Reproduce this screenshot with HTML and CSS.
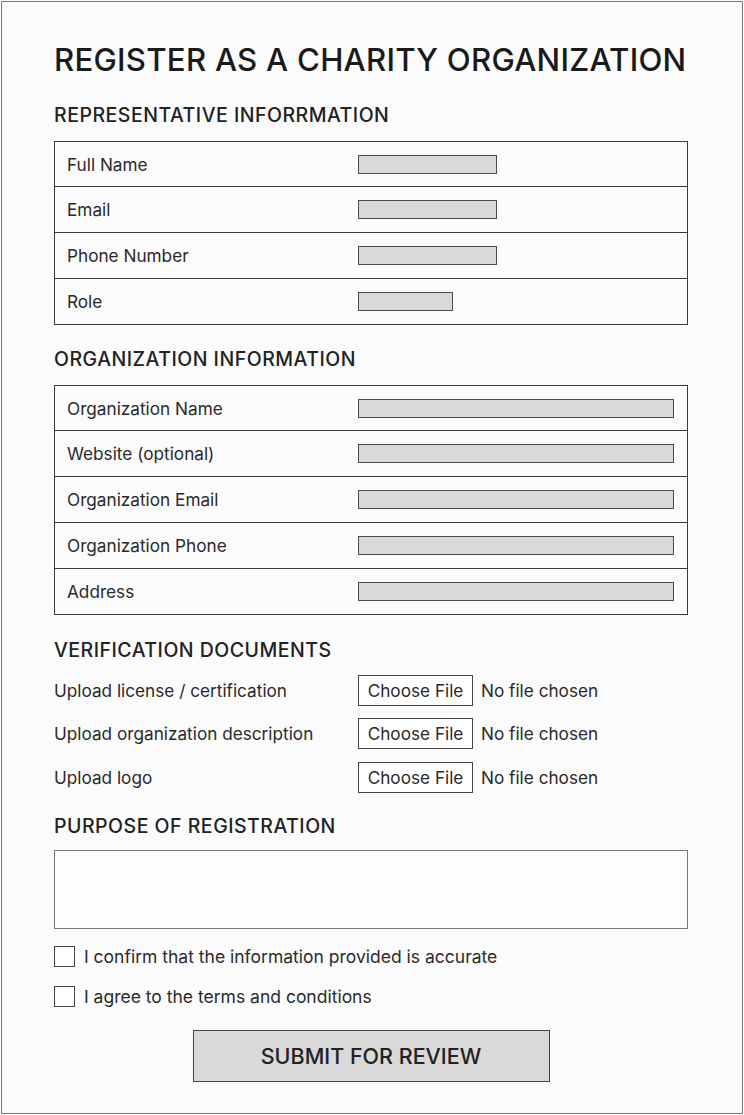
FILE: index.html
```html
<!DOCTYPE html>
<html>
<head>
<meta charset="utf-8">
<link rel="stylesheet" href="styles.css">
</head>
<body>
<div class="page">
  <h1 class="title">REGISTER AS A CHARITY ORGANIZATION</h1>

  <h2 class="section s1">REPRESENTATIVE INFORRMATION</h2>
  <div class="table">
    <div class="row"><span class="label">Full Name</span><span class="field short"></span></div>
    <div class="row"><span class="label">Email</span><span class="field short"></span></div>
    <div class="row"><span class="label">Phone Number</span><span class="field short"></span></div>
    <div class="row"><span class="label">Role</span><span class="field tiny"></span></div>
  </div>

  <h2 class="section s2">ORGANIZATION INFORMATION</h2>
  <div class="table">
    <div class="row"><span class="label">Organization Name</span><span class="field long"></span></div>
    <div class="row"><span class="label">Website (optional)</span><span class="field long"></span></div>
    <div class="row"><span class="label">Organization Email</span><span class="field long"></span></div>
    <div class="row"><span class="label">Organization Phone</span><span class="field long"></span></div>
    <div class="row"><span class="label">Address</span><span class="field long"></span></div>
  </div>

  <h2 class="section s3">VERIFICATION DOCUMENTS</h2>
  <div class="uploads">
    <div class="upload"><span class="ulabel">Upload license / certification</span><span class="file"><span class="choose">Choose File</span><span class="none">No file chosen</span></span></div>
    <div class="upload"><span class="ulabel">Upload organization description</span><span class="file"><span class="choose">Choose File</span><span class="none">No file chosen</span></span></div>
    <div class="upload"><span class="ulabel">Upload logo</span><span class="file"><span class="choose">Choose File</span><span class="none">No file chosen</span></span></div>
  </div>

  <h2 class="section s4">PURPOSE OF REGISTRATION</h2>
  <div class="textarea"></div>

  <div class="checks">
    <label class="check"><span class="box"></span><span>I confirm that the information provided is accurate</span></label>
    <label class="check"><span class="box"></span><span>I agree to the terms and conditions</span></label>
  </div>

  <div class="actions"><button class="submit">SUBMIT FOR REVIEW</button></div>
</div>
</body>
</html>
```
FILE: styles.css
```css
* { box-sizing: border-box; }
html, body { margin: 0; padding: 0; background: #ffffff; }
body { font-family: Inter, "Liberation Sans", sans-serif; color: #1e1e1e; }

.page {
  margin: 1px;
  height: 1113px;
  border: 1px solid #7a7a7a;
  background: #fbfbfb;
  padding: 38px 54px 0 52px;
  display: flex;
  flex-direction: column;
}

.title {
  margin: 0;
  font-size: 31.2px;
  font-weight: 500;
  line-height: 40px;
  letter-spacing: 0.25px;
  color: #1a1a1a;
}

.section {
  margin: 22px 0 14px;
  font-size: 19.5px;
  font-weight: 500;
  line-height: 24px;
  letter-spacing: 0.5px;
  color: #222;
}
.s1 { margin-top: 23px; }
.s2 { margin-top: 22px; }
.s3 { margin-top: 23px; }
.s4 { margin-top: 21px; margin-bottom: 12px; }

.table {
  border: 1px solid #3a3a3a;
  display: flex;
  flex-direction: column;
}
.row {
  height: 46px;
  display: flex;
  align-items: center;
  padding-left: 12px;
  border-top: 1px solid #3a3a3a;
}
.row:first-child { border-top: none; height: 44px; }
.label {
  width: 291px;
  font-size: 17.2px;
  color: #2a2a2a;
}
.field {
  height: 19px;
  background: #d9d9d9;
  border: 1.5px solid #4a4a4a;
  display: block;
}
.short { width: 139px; }
.tiny { width: 95px; }
.long { width: 316px; }

.uploads { display: flex; flex-direction: column; gap: 11.5px; margin-top: -2px; }
.upload { display: flex; align-items: center; height: 32px; }
.ulabel { width: 304px; font-size: 17.2px; color: #2a2a2a; }
.file { display: flex; align-items: center; gap: 8px; font-size: 17.2px; color: #2a2a2a; }
.choose {
  border: 1px solid #444;
  height: 31px;
  width: 115px;
  display: flex;
  align-items: center;
  justify-content: center;
  background: #fff;
}

.textarea {
  height: 79px;
  border: 1.5px solid #777;
  background: #fdfdfd;
}

.checks { display: flex; flex-direction: column; gap: 19px; margin-top: 17px; }
.check { display: flex; align-items: center; gap: 9px; font-size: 17.5px; color: #2a2a2a; }
.box {
  width: 21px;
  height: 21px;
  border: 1.5px solid #444;
  background: #fff;
  display: block;
}

.actions { display: flex; justify-content: center; margin-top: 23px; }
.submit {
  width: 357px;
  height: 52px;
  background: #d9d9d9;
  border: 1.5px solid #444;
  font-family: Inter, "Liberation Sans", sans-serif;
  font-size: 21.5px;
  font-weight: 500;
  color: #222;
}
```
